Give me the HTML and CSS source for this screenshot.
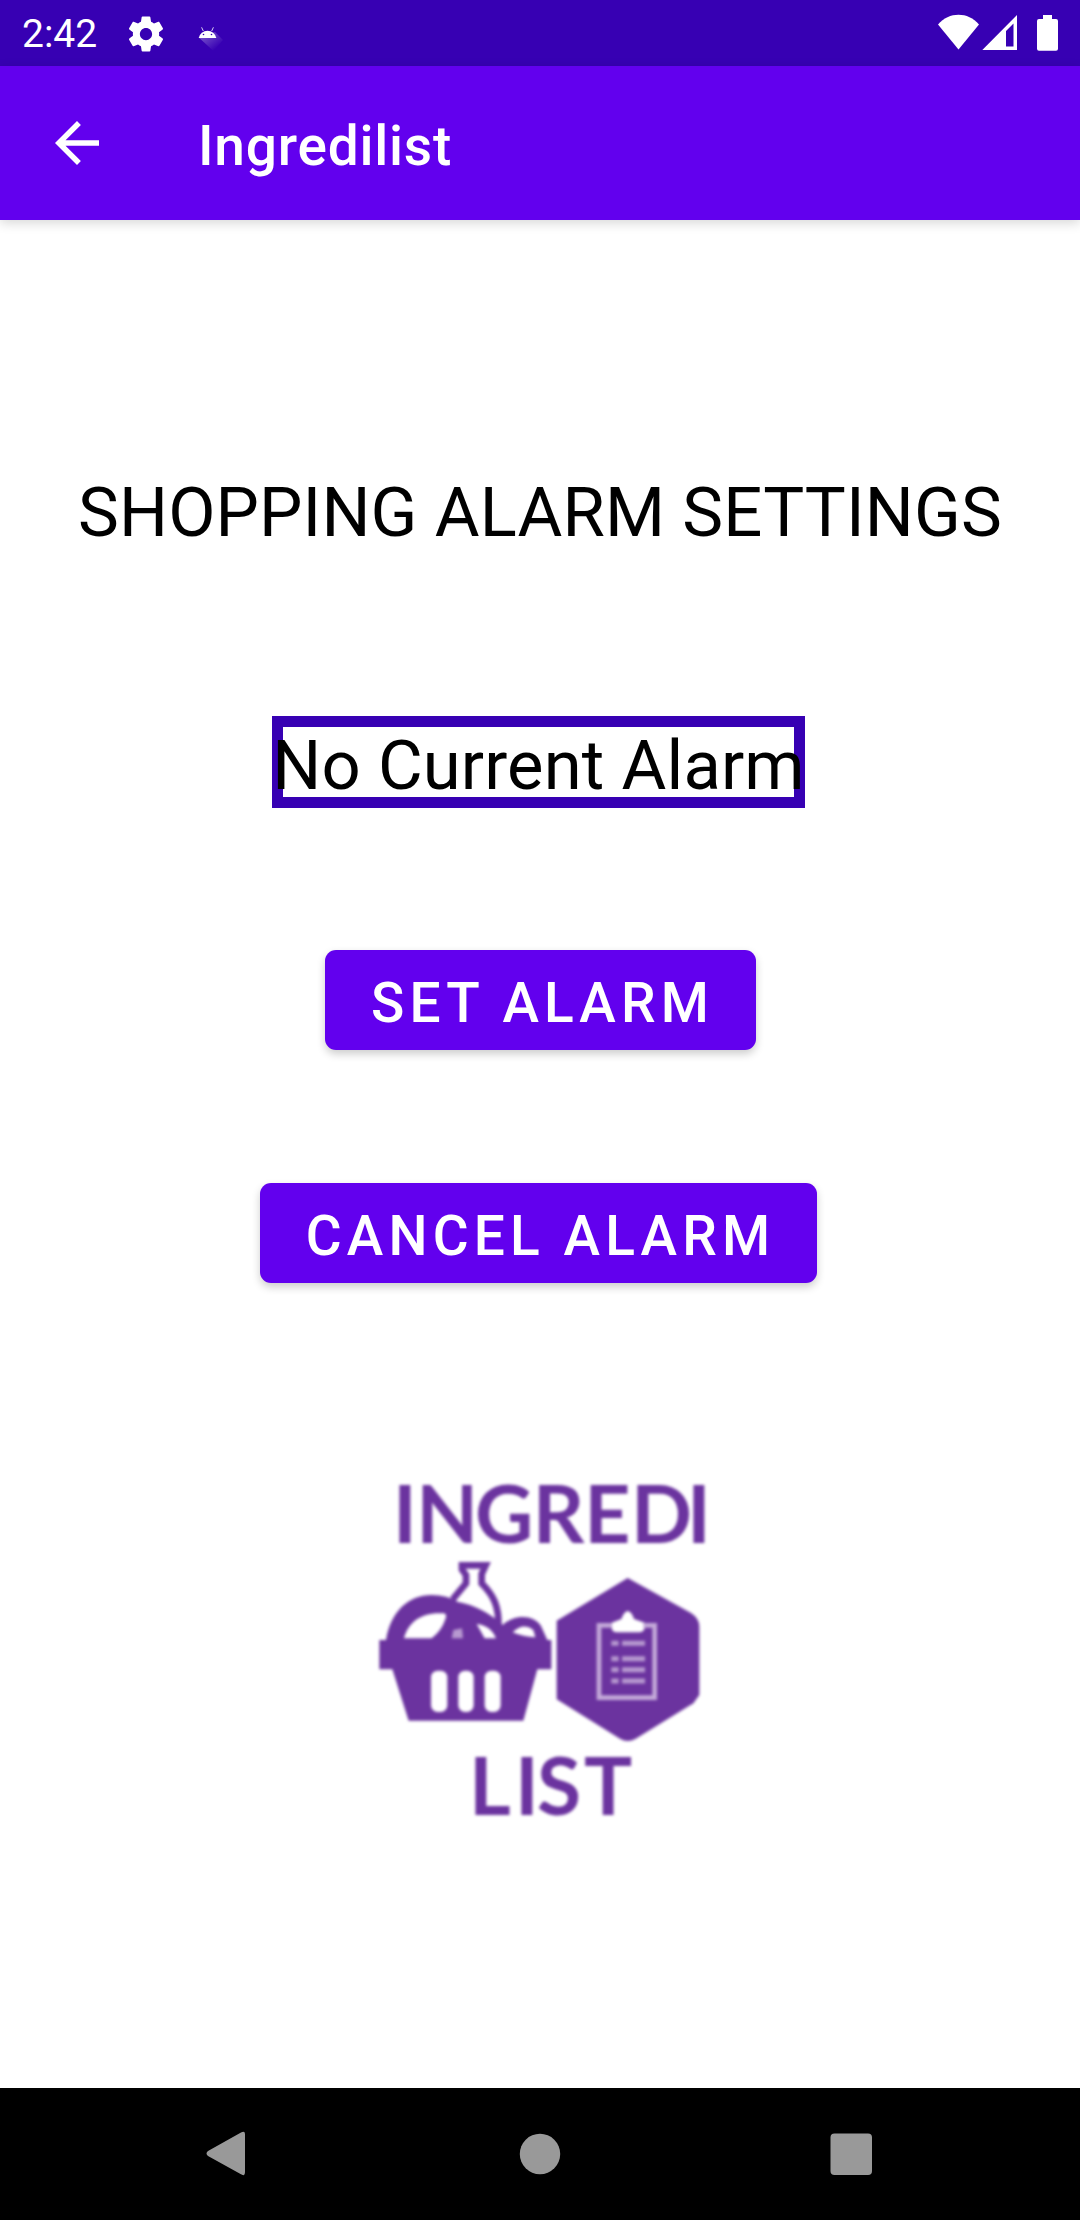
FILE: index.html
```html
<!DOCTYPE html>
<html lang="en">
<head>
<meta charset="utf-8">
<title>Ingredilist</title>
<link rel="stylesheet" href="styles.css">
</head>
<body>
<div class="screen">
  <div class="status-bar">
    <span class="clock">2:42</span>
    <svg class="gear" viewBox="0 0 24 24"><path fill="#fff" d="M19.43 12.98c.04-.32.07-.64.07-.98s-.03-.66-.07-.98l2.11-1.65c.19-.15.24-.42.12-.64l-2-3.46c-.12-.22-.39-.3-.61-.22l-2.49 1c-.52-.4-1.08-.73-1.69-.98l-.38-2.65C14.46 2.18 14.25 2 14 2h-4c-.25 0-.46.18-.49.42l-.38 2.65c-.61.25-1.17.59-1.69.98l-2.49-1c-.23-.09-.49 0-.61.22l-2 3.46c-.13.22-.07.49.12.64l2.11 1.65c-.04.32-.07.65-.07.98s.03.66.07.98l-2.11 1.65c-.19.15-.24.42-.12.64l2 3.46c.12.22.39.3.61.22l2.49-1c.52.4 1.08.73 1.69.98l.38 2.65c.03.24.24.42.49.42h4c.25 0 .46-.18.49-.42l.38-2.65c.61-.25 1.17-.59 1.69-.98l2.49 1c.23.09.49 0 .61-.22l2-3.46c.12-.22.07-.49-.12-.64l-2.11-1.65zM12 15.5c-1.93 0-3.500-1.570-3.500-3.500s1.570-3.500 3.500-3.500 3.500 1.570 3.500 3.500-1.570 3.500-3.500 3.500z"/></svg>
    <svg class="droid" viewBox="0 0 28 28">
      <defs><linearGradient id="fade" x1="0" y1="0" x2="1" y2="1"><stop offset=".2" stop-color="#fff" stop-opacity=".3"/><stop offset=".8" stop-color="#fff" stop-opacity="0"/></linearGradient></defs>
      <path fill="url(#fade)" d="M2.700 13.500 19 8l8 8-9.500 11z"/>
      <path fill="#fff" d="M2.700 14a9 9.200 0 0 1 17.600 0z"/>
      <path stroke="#fff" stroke-width=".8" d="M7.300 7 5.600 3.300M15.700 7l1.700-3.700"/>
      <circle cx="7.500" cy="10.500" r=".8" fill="#3700b3"/><circle cx="15.500" cy="10.500" r=".8" fill="#3700b3"/>
    </svg>
    <svg class="signals" viewBox="0 0 122 38">
      <path fill="#fff" d="M0 10.500C11-2.500 30-2.500 41 10.500L20.500 35.500z"/>
      <path fill="#fff" fill-rule="evenodd" d="M44.300 36 79 1v35zM68 17v15.500h7.500v-23z"/>
      <path fill="#fff" d="M105 1h9v4h4q2 0 2 2v27.700q0 2-2 2h-17q-2 0-2-2V7q0-2 2-2h4z"/>
    </svg>
  </div>
  <header class="app-bar">
    <svg class="back" viewBox="0 0 24 24"><path fill="#fff" d="M20 11H7.830l5.590-5.590L12 4l-8 8 8 8 1.410-1.410L7.830 13H20v-2z"/></svg>
    <h1 class="title">Ingredilist</h1>
  </header>
  <main class="content">
    <h2 class="heading">SHOPPING ALARM SETTINGS</h2>
    <div class="current">No Current Alarm</div>
    <button class="button set">SET ALARM</button>
    <button class="button cancel">CANCEL ALARM</button>
    <svg class="logo" viewBox="0 0 1080 1140">
      <g fill="#6b339f">
        <text class="logo-text" y="250" x="99 169 345 518 673 813 981">INGREDI</text>
        <path fill="none" stroke="#6b339f" stroke-width="20" d="M278 418 318 370V345L306 328V316H377L365 342V370C400 405 418 440 415 500"/>
        <path d="M78 540C92 455 145 405 215 405Q262 405 292 425Q370 440 428 495C462 463 520 462 543 498L562 540H574V628H532L490 782H146L97 628H58V540z"/>
        <path d="M803 354 993 459Q1018 475 1018 500V705L1000 730 827 836Q803 850 780 836L590 718V482z"/>
        <text class="logo-text" y="1065" x="327 465 531 672">LIST</text>
      </g>
      <g fill="#fff">
        <path d="M132 535C145 485 185 455 252 460Q262 462 256 478Q245 512 215 535z"/>
        <path d="M350 492Q392 496 408 535H374Z"/>
        <path d="M458 517Q490 486 520 510L526 532Q490 530 458 517z"/>
        <path fill="#b799d0" d="M280 510 306 505 309 535H275z"/>
        <rect x="213" y="632" width="49" height="124" rx="20"/>
        <rect x="295" y="632" width="46" height="124" rx="20"/>
        <rect x="374" y="632" width="48" height="124" rx="20"/>
        <path d="M755 488 784 477Q792 455 803 453Q815 455 822 477L854 488V505Q850 517 838 517H770Q757 517 755 505z"/>
      </g>
      <path class="sheet" d="M755 496H717V713H884V496H850"/>
      <path class="rows" d="M754 550H776M786 550H855M754 596H776M786 596H855M754 629H776M786 629H855M754 663H776M786 663H855"/>
    </svg>
  </main>
  <nav class="nav-bar">
    <svg viewBox="0 0 60 60"><path fill="#999" d="M12 27 45 8.500Q49 6.500 49 10V48Q49 53 44.500 50L12 32Q9 29.500 12 27z"/></svg>
    <svg viewBox="0 0 60 60"><circle cx="30" cy="30" r="20.200" fill="#999"/></svg>
    <svg viewBox="0 0 60 60"><rect x="9.500" y="9.500" width="41.500" height="41.500" rx="4" fill="#999"/></svg>
  </nav>
</div>
</body>
</html>
```
FILE: styles.css
```css
* { box-sizing: border-box; }
body { margin: 0; font-family: Roboto, "Liberation Sans", sans-serif; }
svg { display: block; flex: none; }
.screen { width: 1080px; height: 2220px; display: flex; flex-direction: column; background: #fff; overflow: hidden; }
.status-bar { height: 66px; flex: none; display: flex; background: #3700b3; color: #fff; }
.clock { width: 104px; padding-left: 22px; font-size: 39px; line-height: 68px; }
.gear { width: 42px; height: 42px; margin: 12.500px 0 0 21px; }
.droid { width: 28px; height: 28px; margin: 24px 0 0 29px; }
.signals { width: 122px; height: 38px; margin: 14px 20px 0 auto; }
.app-bar { height: 154px; flex: none; display: flex; align-items: center; padding-left: 44px; background: #6200ee; color: #fff; box-shadow: 0 3px 11px rgba(0, 0, 0, .16); }
.back { width: 66px; height: 66px; }
.title { margin: 6px 0 0 88px; font-size: 55px; font-weight: 500; line-height: 64px; letter-spacing: .780px; }
.content { flex: 1; display: flex; flex-direction: column; align-items: center; color: #000; }
.heading { margin: 253px 0 0; font-size: 68.750px; font-weight: 400; line-height: 80px; letter-spacing: .130px; white-space: nowrap; }
.current { width: 533px; height: 92px; margin: 163px 3px 0 0; border: 11px solid #3700b3; display: flex; justify-content: center; font-size: 68.750px; line-height: 78px; letter-spacing: .130px; white-space: nowrap; }
.button { height: 100px; border: 0; border-radius: 11px; padding: 5px 0 0 4px; background: #6200ee; color: #fff; font: 500 55px/64px Roboto, "Liberation Sans", sans-serif; letter-spacing: 5.150px; white-space: nowrap; box-shadow: 0 4px 8px rgba(0, 0, 0, .2); }
.set { width: 431px; margin: 142px 0 0 1px; }
.cancel { width: 557px; margin: 133px 3px 0 0; }
.logo { width: 360px; height: 380px; margin-top: 177px; filter: blur(1.400px); }
.logo-text { font-family: Lato, "Open Sans", sans-serif; font-size: 241px; font-weight: 700; }
.sheet { fill: none; stroke: #c4aad9; stroke-width: 14; }
.rows { stroke: #b799d0; stroke-width: 15; }
.nav-bar { height: 132px; flex: none; display: flex; justify-content: space-between; align-items: center; padding: 0 199px 0 196px; background: #000; }
.nav-bar svg { width: 60px; height: 60px; }
.nav-bar svg:nth-child(2) { margin-left: 3px; }
```
